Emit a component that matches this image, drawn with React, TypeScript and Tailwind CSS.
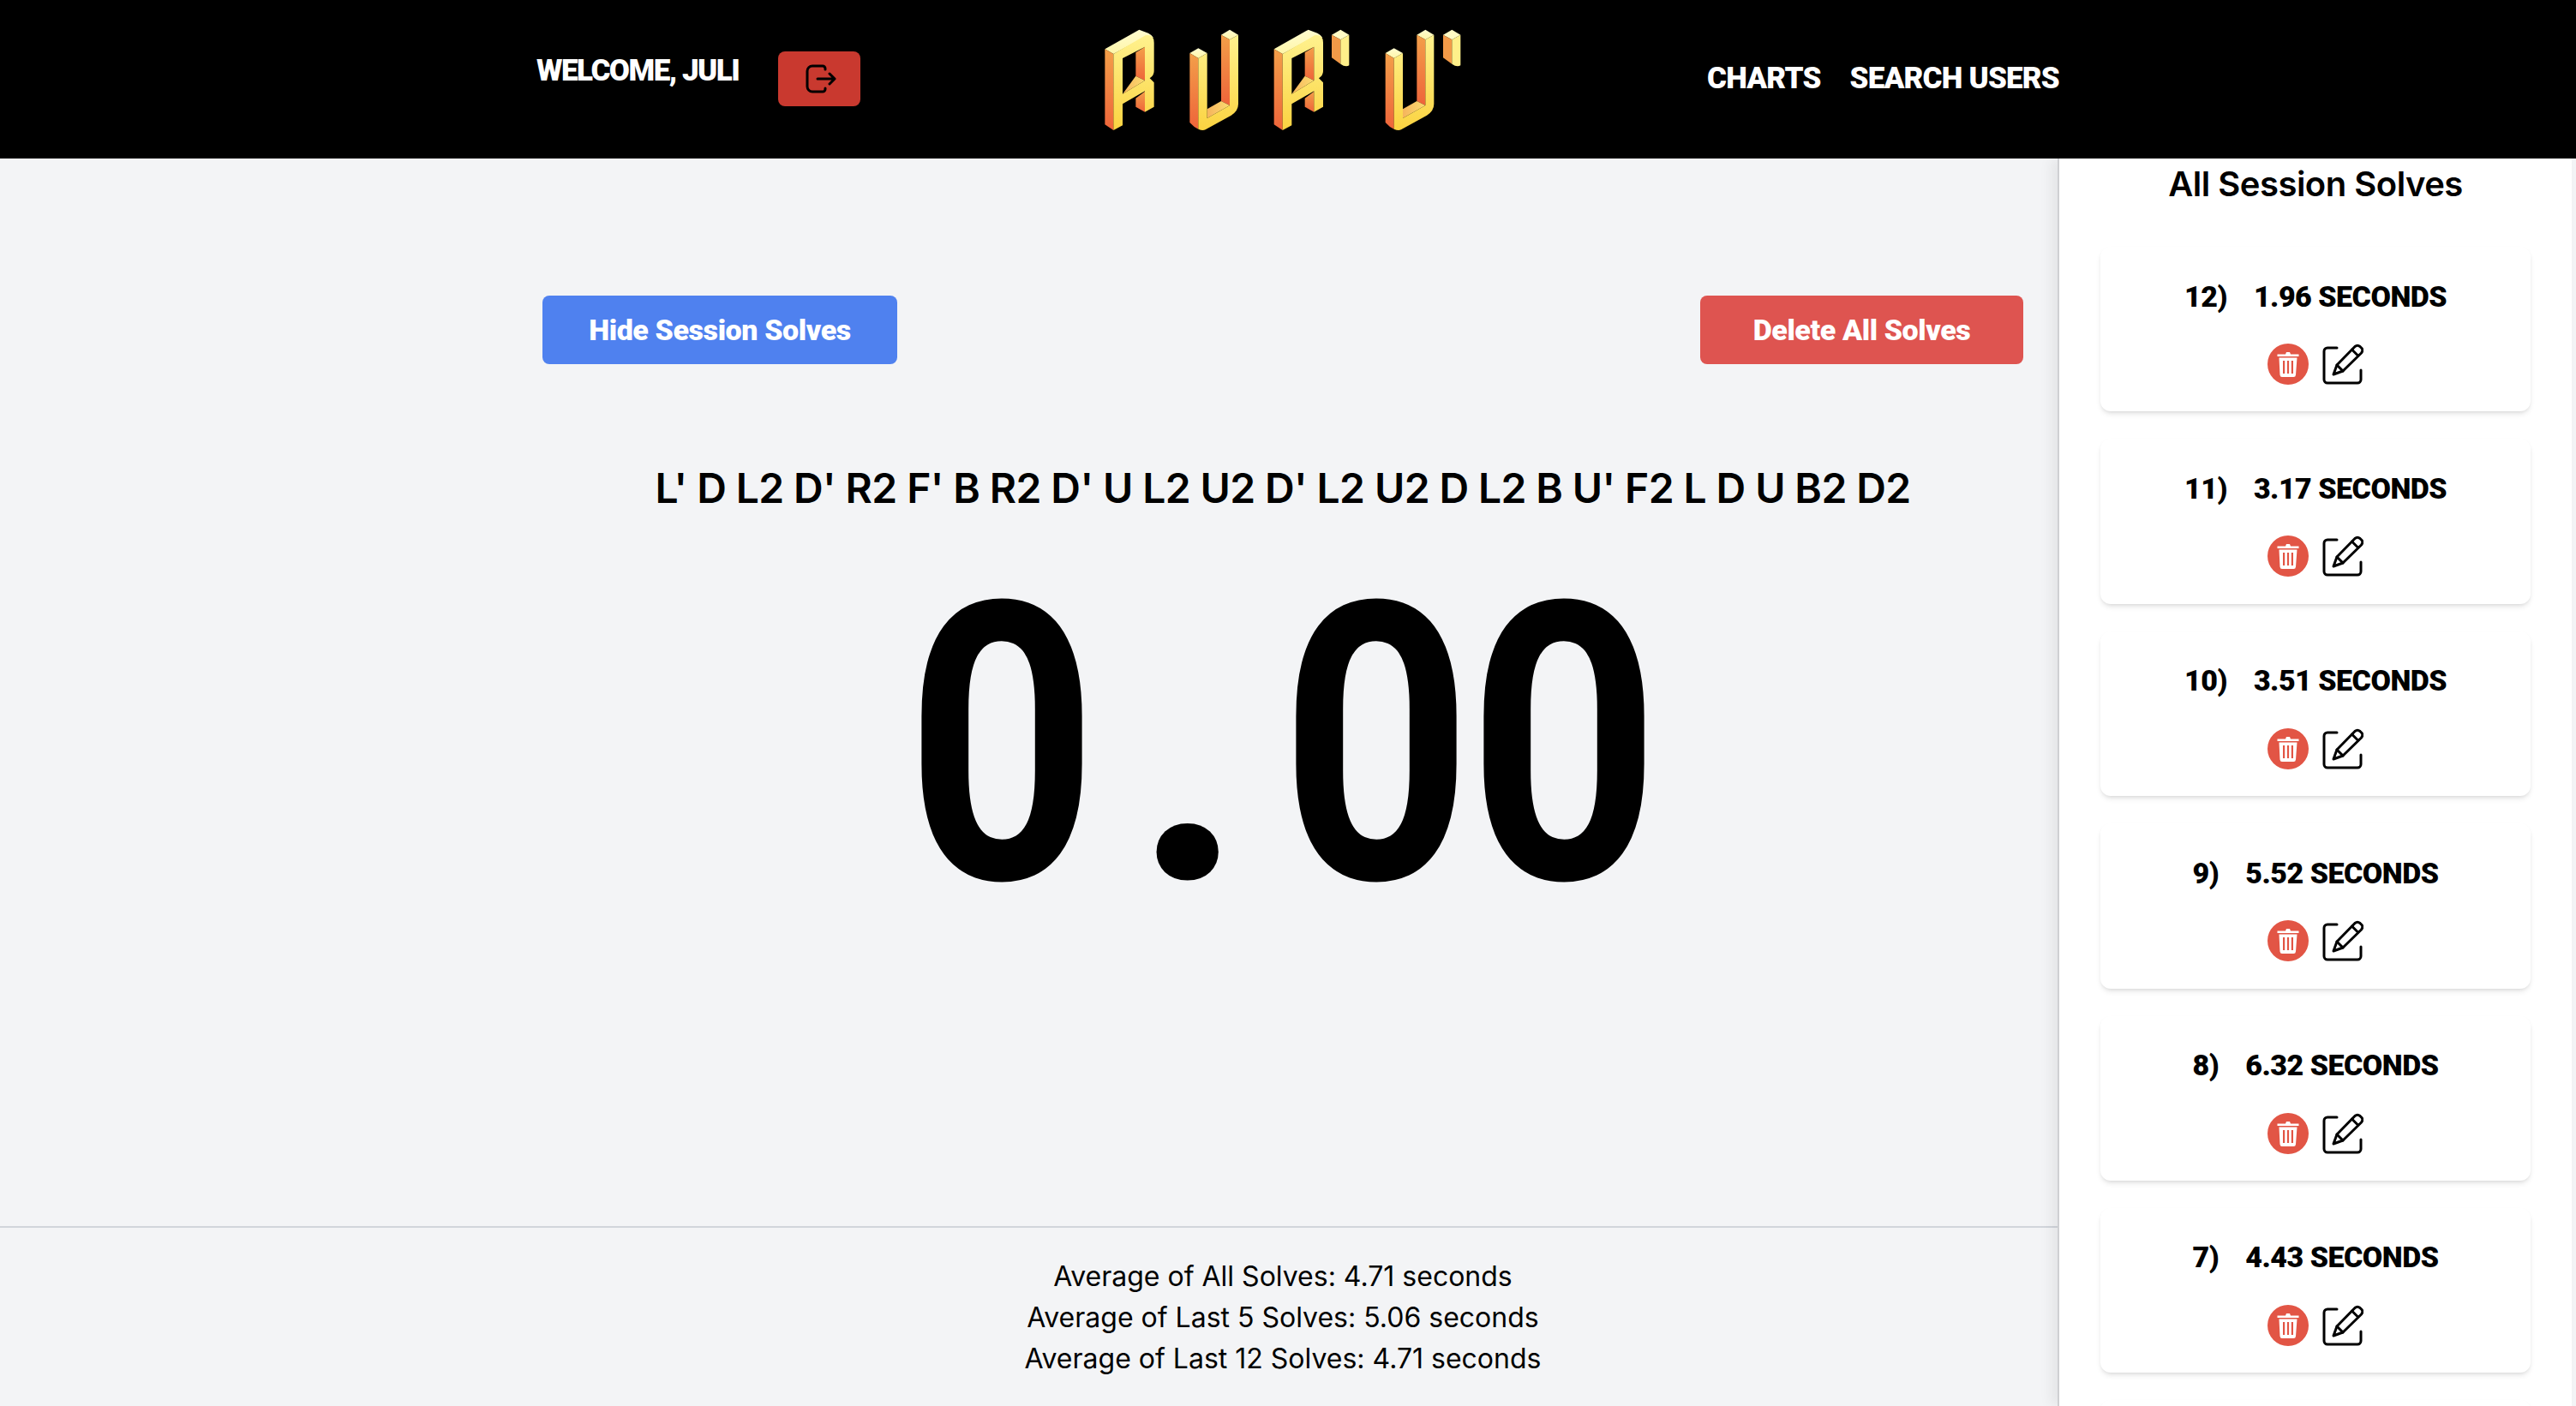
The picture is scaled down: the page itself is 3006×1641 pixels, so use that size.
const solves = [
  { n: 12, time: '1.96' },
  { n: 11, time: '3.17' },
  { n: 10, time: '3.51' },
  { n: 9, time: '5.52' },
  { n: 8, time: '6.32' },
  { n: 7, time: '4.43' },
];

const scramble = "L' D L2 D' R2 F' B R2 D' U L2 U2 D' L2 U2 D L2 B U' F2 L D U B2 D2";

function LogoR({ x }: { x: number }) {
  return (
    <g transform={`translate(${x} 0)`}>
      <path d="M148 148L268 80L300 92Q312 98 318 108L290 104L178 165Z" fill="url(#logoTop)" />
      <path d="M148 148L178 165V432L148 412Z" fill="url(#logoSide)" />
      <path d="M256 160L288 140V258L256 242Z" fill="url(#logoSide)" />
      <path d="M210 305L256 242L288 258Z" fill="url(#logoInner)" />
      <path d="M256 320L288 296V368L256 350Z" fill="url(#logoSide)" />
      <path
        fillRule="evenodd"
        d="M178 165L290 100Q320 95 320 125V225Q320 240 305 250L320 265V350L288 368V295L210 340V415L178 432ZM210 180V305L288 258V140Z"
        fill="url(#logoFront)"
      />
    </g>
  );
}

function LogoU({ x }: { x: number }) {
  return (
    <g transform={`translate(${x} 0)`}>
      <path d="M445 162L475 145L506 162L475 180Z" fill="url(#logoTop)" />
      <path d="M445 162L475 180V428Q460 422 445 405Z" fill="url(#logoSide)" />
      <path d="M555 98L585 80L615 98L585 115Z" fill="url(#logoTop)" />
      <path d="M555 98L585 115V345L555 330Z" fill="url(#logoSide)" />
      <path d="M506 358L555 330L585 345L506 390Z" fill="url(#logoInner)" />
      <path
        d="M475 180L506 162V390L585 345V115L615 98V340Q615 365 590 380L500 430Q490 435 475 428Z"
        fill="url(#logoFront)"
      />
    </g>
  );
}

function LogoPrime({ x }: { x: number }) {
  return (
    <g transform={`translate(${x} 0)`}>
      <path d="M942 98L973 80L1003 98L973 115Z" fill="#fffbc4" />
      <path d="M942 98L973 115V200L942 178Z" fill="#f29a48" />
      <path d="M973 115L1003 98V205Q990 212 973 200Z" fill="#fff08a" />
    </g>
  );
}

function Logo() {
  return (
    <svg viewBox="0 0 1500 510" className="w-[500px] h-[170px] shrink-0" role="img" aria-label="R U R' U'">
      <defs>
        <linearGradient id="logoTop" x1="0" y1="0" x2="0" y2="1">
          <stop offset="0" stopColor="#fffcd0" />
          <stop offset="1" stopColor="#fff6a8" />
        </linearGradient>
        <linearGradient id="logoSide" x1="0" y1="0" x2="0" y2="1">
          <stop offset="0" stopColor="#f39f49" />
          <stop offset="1" stopColor="#ee643a" />
        </linearGradient>
        <linearGradient id="logoFront" x1="0" y1="0" x2="0" y2="1">
          <stop offset="0" stopColor="#fff28e" />
          <stop offset="1" stopColor="#fbd341" />
        </linearGradient>
        <linearGradient id="logoInner" x1="0" y1="0" x2="1" y2="0">
          <stop offset="0" stopColor="#f6b45c" />
          <stop offset="1" stopColor="#fbdc70" />
        </linearGradient>
      </defs>
      <LogoR x={0} />
      <LogoU x={0} />
      <LogoR x={592} />
      <LogoPrime x={0} />
      <LogoU x={685} />
      <LogoPrime x={390} />
    </svg>
  );
}

function LogoutIcon() {
  return (
    <svg viewBox="0 0 36 34" className="w-9 h-[34px] ml-1" fill="none" stroke="#000" strokeWidth="3" strokeLinecap="round" strokeLinejoin="round">
      <path d="M23 6V5a3 3 0 0 0-3-3H8a6 6 0 0 0-6 6v18a6 6 0 0 0 6 6h12a3 3 0 0 0 3-3v-1" />
      <path d="M14 17h19M28 11l6 6-6 6" />
    </svg>
  );
}

function TrashIcon() {
  return (
    <span className="w-12 h-12 rounded-full bg-[#e25545] flex items-center justify-center">
      <svg viewBox="0 0 28 30" className="w-7 h-[30px]" fill="#fff">
        <path d="M11 3.5L12 1h4l1 2.500h9.500v2.500h-25v-2.500z" />
        <path fillRule="evenodd" d="M3.500 7.500h21l-1.500 20q-.2 2.500-2.500 2.500h-13.500q-2.300 0-2.500-2.500zM8 11v15h2.200v-15zM12.900 11v15h2.200v-15zM17.800 11v15h2.200v-15z" />
      </svg>
    </span>
  );
}

function EditIcon() {
  return (
    <svg viewBox="0 0 48 48" className="w-12 h-12" fill="none" stroke="#000" strokeWidth="3" strokeLinecap="round" strokeLinejoin="round">
      <path d="M17 5H6a4 4 0 0 0-4 4v33a4 4 0 0 0 4 4h35a4 4 0 0 0 4-4V31" />
      <path d="M13 36l4-11L38 3.500q3-2.500 6 0l2 2q2 2.500-.5 5.500L24 32z" />
      <path d="M17 25l7 7M34.500 7l7 7" />
    </svg>
  );
}

function SolveCard({ n, time }: { n: number; time: string }) {
  return (
    <div className="h-[192.4px] shrink-0 rounded-xl bg-white shadow-md flex flex-col items-center pt-[36px]">
      <div className="flex gap-[31px] items-center h-[44px] text-[34px] font-black uppercase tracking-[-0.5px] text-black">
        <span>{n})</span>
        <span>{time} seconds</span>
      </div>
      <div className="flex gap-4 mt-[33px]">
        <TrashIcon />
        <EditIcon />
      </div>
    </div>
  );
}

export default function App() {
  return (
    <div className="h-[1641px] w-[3006px] overflow-hidden flex flex-col bg-black font-['Inter',sans-serif] text-black">
      <header className="h-[185px] shrink-0 flex items-center bg-black pl-[626px] text-white font-['Roboto',sans-serif] font-black uppercase">
        <span className="text-[35px] tracking-[-1.5px] mb-[18px] w-[249px] whitespace-nowrap">Welcome, Juli</span>
        <button className="ml-[33px] w-[96px] h-[64px] mb-[1px] rounded-lg bg-[#c9392f] flex items-center justify-center">
          <LogoutIcon />
        </button>
        <div className="ml-[236px]">
          <Logo />
        </div>
        <nav className="ml-[252px] flex gap-[34px] text-[35px] tracking-[-0.8px] whitespace-nowrap">
          <a>Charts</a>
          <a>Search Users</a>
        </nav>
      </header>

      <div className="flex-1 min-h-0 flex bg-[#f3f4f6] pr-[5px]">
        <main className="w-[2401px] shrink-0 flex flex-col">
          <div className="h-[1246px] pt-[160px] pl-[633px] pr-[40px]">
            <div className="flex justify-between font-['Roboto',sans-serif] font-black uppercase text-white text-[34px]">
              <button className="w-[414px] h-[80px] rounded-lg bg-[#4f81ef] tracking-[-0.4px]">Hide Session Solves</button>
              <button className="w-[377px] h-[80px] rounded-lg bg-[#de5450] tracking-[-0.4px]">Delete All Solves</button>
            </div>
            <p className="mt-[109px] text-center text-[48px] leading-[72px] font-semibold tracking-[-0.6px] whitespace-nowrap">{scramble}</p>
            <div className="mt-[99px] h-[331px] flex justify-center font-['Roboto',sans-serif] font-bold text-[453px] leading-[331px]">
              <span className="w-[200px] flex justify-center scale-x-[0.86]">0</span>
              <span className="w-[237px] flex justify-center">.</span>
              <span className="w-[200px] flex justify-center scale-x-[0.86]">0</span>
              <span className="w-[200px] ml-[19px] flex justify-center scale-x-[0.86]">0</span>
            </div>
          </div>
          <section className="flex-1 border-t-2 border-[#d1d5db] pt-[33px] pl-[633px] pr-[40px] text-center text-[32px] leading-[48px]">
            <p>Average of All Solves: 4.71 seconds</p>
            <p>Average of Last 5 Solves: 5.06 seconds</p>
            <p>Average of Last 12 Solves: 4.71 seconds</p>
          </section>
        </main>

        <aside className="relative flex-1 min-w-0 overflow-hidden bg-white border-l-2 border-[#cfd0d3] shadow-[-8px_0_14px_rgba(0,0,0,0.06)] px-[48px]">
          <h2 className="h-[103px] pt-[6px] text-center text-[40px] leading-[48px] font-semibold tracking-[-0.5px]">All Session Solves</h2>
          <div className="flex flex-col gap-[32px] font-['Roboto',sans-serif]">
            {solves.map((s) => (
              <SolveCard key={s.n} n={s.n} time={s.time} />
            ))}
            <div className="h-[192.4px] shrink-0 rounded-xl bg-white shadow-md" />
          </div>
        </aside>
      </div>
    </div>
  );
}
